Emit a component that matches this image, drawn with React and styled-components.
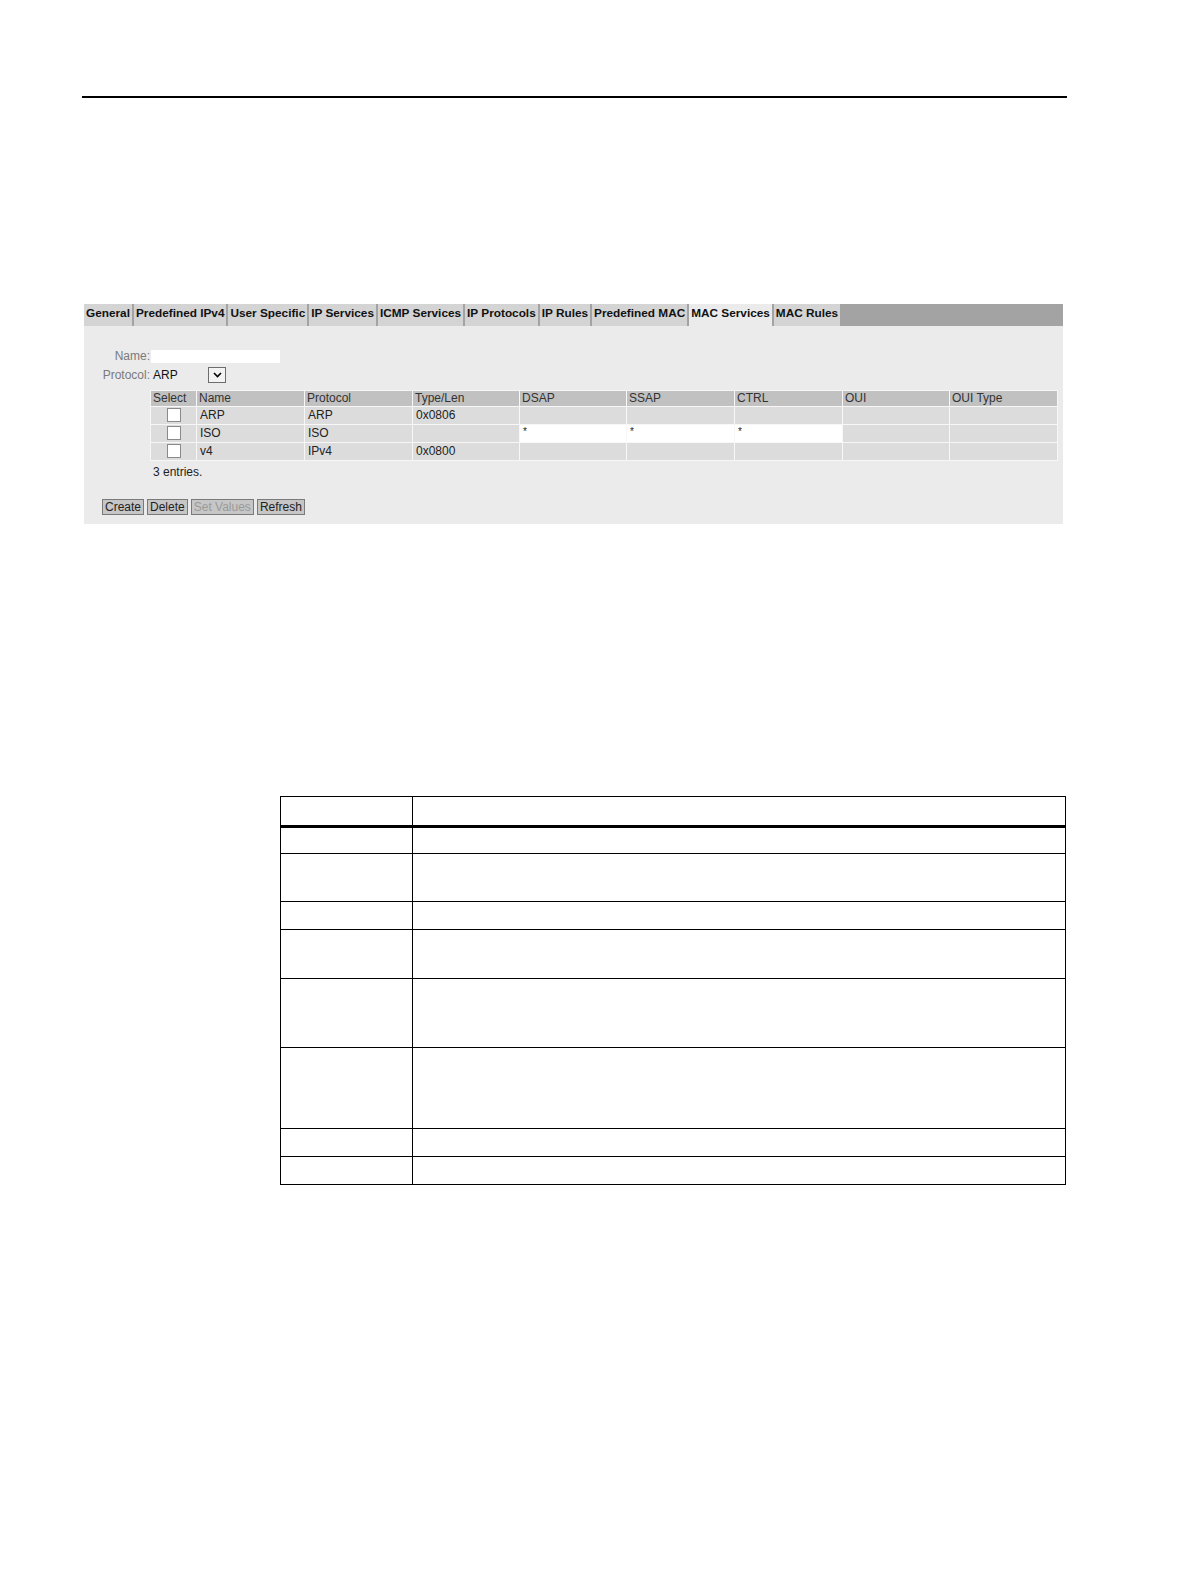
import React from "react";
import styled, { createGlobalStyle } from "styled-components";

const GlobalStyle = createGlobalStyle`
  html, body {
    margin: 0;
    padding: 0;
    background: #ffffff;
    width: 1191px;
    height: 1587px;
    overflow: hidden;
  }
  body {
    font-family: "Liberation Sans", Arial, sans-serif;
    color: #000;
  }
`;

const tabs = [
  "General",
  "Predefined IPv4",
  "User Specific",
  "IP Services",
  "ICMP Services",
  "IP Protocols",
  "IP Rules",
  "Predefined MAC",
  "MAC Services",
  "MAC Rules",
];

const columns = [
  { label: "Select", width: 45 },
  { label: "Name", width: 107 },
  { label: "Protocol", width: 107 },
  { label: "Type/Len", width: 106 },
  { label: "DSAP", width: 106 },
  { label: "SSAP", width: 107 },
  { label: "CTRL", width: 107 },
  { label: "OUI", width: 106 },
  { label: "OUI Type", width: 107 },
];

const services = [
  { name: "ARP", protocol: "ARP", type: "0x0806", editable: false },
  { name: "ISO", protocol: "ISO", type: "", editable: true },
  { name: "v4", protocol: "IPv4", type: "0x0800", editable: false },
];

const docRows = [27, 48, 28, 49, 69, 81, 28, 28];

const App = () => {
  return (
    <>
      <GlobalStyle />
      <Page>
        <HeaderRule />

        <Panel>
          <TabBar>
            {tabs.map((t) => (
              <Tab key={t} $active={t === "MAC Services"}>
                {t}
              </Tab>
            ))}
          </TabBar>

          <Content>
            <FormRow>
              <Label>Name:</Label>
              <TextInput />
            </FormRow>
            <FormRow>
              <Label>Protocol:</Label>
              <Select>
                <span>ARP</span>
                <SelectArrow>
                  <svg width="11" height="8" viewBox="0 0 11 8">
                    <path d="M2 2 L5.5 5.5 L9 2" fill="none" stroke="#000" strokeWidth="1.6" />
                  </svg>
                </SelectArrow>
              </Select>
            </FormRow>

            <Grid>
              <colgroup>
                {columns.map((c) => (
                  <col key={c.label} style={{ width: c.width }} />
                ))}
              </colgroup>
              <thead>
                <tr>
                  {columns.map((c) => (
                    <Th key={c.label}>{c.label}</Th>
                  ))}
                </tr>
              </thead>
              <tbody>
                {services.map((s) => (
                  <tr key={s.name}>
                    <Td $center>
                      <Check />
                    </Td>
                    <Td>{s.name}</Td>
                    <Td>{s.protocol}</Td>
                    <Td>{s.type}</Td>
                    <Td $white={s.editable}>{s.editable ? <Star>*</Star> : null}</Td>
                    <Td $white={s.editable}>{s.editable ? <Star>*</Star> : null}</Td>
                    <Td $white={s.editable}>{s.editable ? <Star>*</Star> : null}</Td>
                    <Td />
                    <Td />
                  </tr>
                ))}
              </tbody>
            </Grid>

            <Entries>3 entries.</Entries>

            <Buttons>
              <Button>Create</Button>
              <Button>Delete</Button>
              <Button $disabled>Set Values</Button>
              <Button>Refresh</Button>
            </Buttons>
          </Content>
        </Panel>

        <DocTable>
          <tbody>
            <DocHead>
              <DocCell $first />
              <DocCell />
            </DocHead>
            {docRows.map((h, i) => (
              <DocRow key={i} $h={h}>
                <DocCell $first />
                <DocCell />
              </DocRow>
            ))}
          </tbody>
        </DocTable>
      </Page>
    </>
  );
};

export default App;

const Page = styled.div`
  width: 1191px;
  height: 1587px;
  overflow: hidden;
  display: flex;
  flex-direction: column;
  align-items: flex-start;
`;

const HeaderRule = styled.div`
  margin: 96px 0 0 82px;
  width: 985px;
  height: 1.5px;
  background: #000;
  flex-shrink: 0;
`;

const Panel = styled.div`
  margin: 206px 0 0 84px;
  width: 979px;
  background: #ebebeb;
  display: flex;
  flex-direction: column;
  flex-shrink: 0;
`;

const TabBar = styled.div`
  display: flex;
  gap: 2px;
  height: 22px;
  background: #a3a3a3;
`;

const Tab = styled.div`
  display: flex;
  align-items: center;
  padding: 0 2px 4px 2px;
  font-size: 11.8px;
  font-weight: bold;
  color: #111;
  background: ${(p) => (p.$active ? "#ebebeb" : "#d4d4d4")};
  white-space: nowrap;
`;

const Content = styled.div`
  display: flex;
  flex-direction: column;
  padding: 22px 0 9px 0;
  font-size: 12px;
`;

const FormRow = styled.div`
  display: flex;
  align-items: center;
  height: 17px;
  margin-bottom: 2px;
`;

const Label = styled.span`
  width: 66px;
  text-align: right;
  color: #7a7a7a;
  padding-right: 1px;
`;

const TextInput = styled.div`
  width: 129px;
  height: 13px;
  background: #ffffff;
`;

const Select = styled.div`
  display: flex;
  align-items: center;
  justify-content: space-between;
  width: 73px;
  height: 16px;
  padding-left: 2px;
  color: #111;
`;

const SelectArrow = styled.div`
  width: 16px;
  height: 14px;
  border: 1px solid #6d6d6d;
  background: #f3f3f3;
  display: flex;
  align-items: center;
  justify-content: center;
`;

const Grid = styled.table`
  margin: 4px 0 0 66px;
  border-collapse: separate;
  border-spacing: 1px;
  background: #f7f7f7;
  table-layout: fixed;
  width: 908px;
`;

const Th = styled.th`
  height: 15px;
  padding: 0 2px;
  background: #c1c1c1;
  color: #333;
  font-weight: normal;
  text-align: left;
  font-size: 12px;
`;

const Td = styled.td`
  height: 17px;
  padding: 0 3px;
  background: ${(p) => (p.$white ? "#ffffff" : "#dcdcdc")};
  color: #222;
  text-align: ${(p) => (p.$center ? "center" : "left")};
  vertical-align: middle;
  font-size: 12px;
`;

const Check = styled.div`
  width: 12px;
  height: 12px;
  margin: 0 auto;
  background: #ffffff;
  border: 1px solid #8a8a8a;
`;

const Star = styled.span`
  font-size: 10px;
  position: relative;
  top: -2px;
`;

const Entries = styled.div`
  margin: 4px 0 0 69px;
  color: #222;
`;

const Buttons = styled.div`
  display: flex;
  gap: 3px;
  margin: 20px 0 0 18px;
`;

const Button = styled.div`
  height: 14px;
  line-height: 14px;
  padding: 0 2px;
  border: 1px solid #7a7a7a;
  background: #c6c6c6;
  color: ${(p) => (p.$disabled ? "#9a9a9a" : "#222")};
  font-size: 12px;
`;

const DocTable = styled.table`
  margin: 272px 0 0 280px;
  width: 786px;
  border-collapse: collapse;
  flex-shrink: 0;
`;

const DocHead = styled.tr`
  height: 30px;
  border-bottom: 3px solid #000;
`;

const DocRow = styled.tr`
  height: ${(p) => p.$h}px;
`;

const DocCell = styled.td`
  border: 1.5px solid #000;
  padding: 0;
  width: ${(p) => (p.$first ? "131px" : "auto")};
`;
